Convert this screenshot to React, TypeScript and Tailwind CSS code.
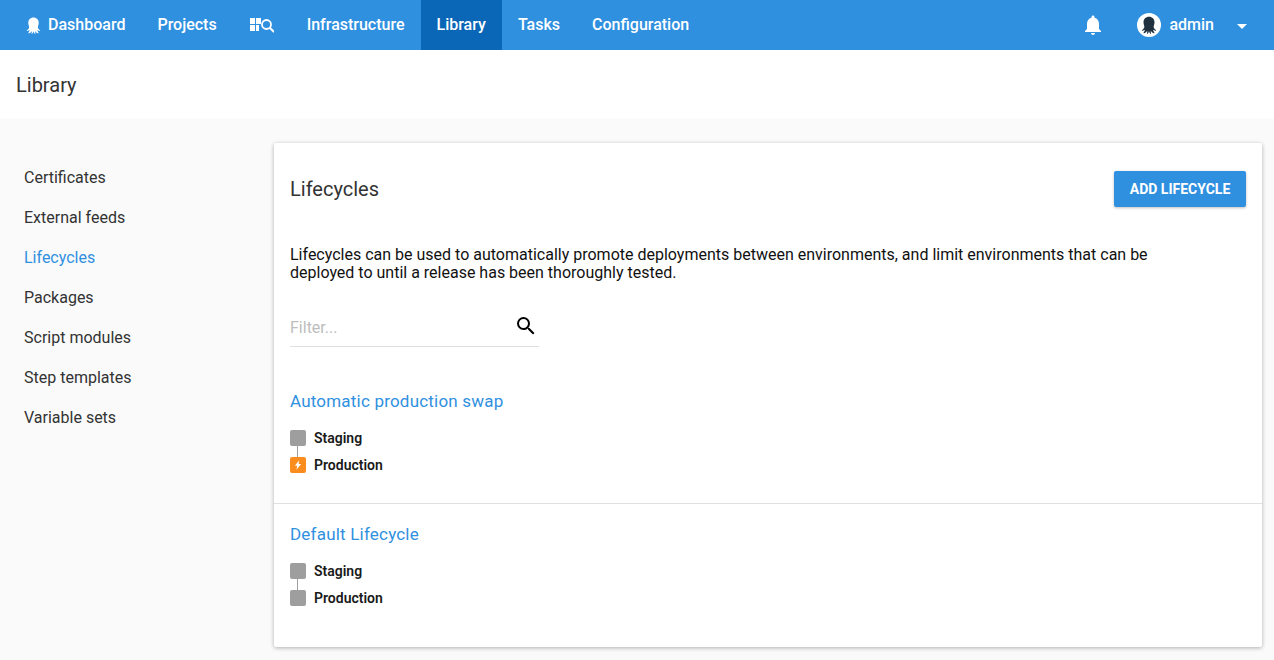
import React from "react";

const Octopus = ({ className }: { className?: string }) => (
  <svg viewBox="0 0 24 24" className={className} fill="currentColor">
    <path d="M12 2c-4 0-6.6 2.9-6.6 6.6 0 2.2.8 3.6 1 5.2.2 1.5-.9 3-2.6 4.2-.6.4-.2 1 .5.9 1.1-.1 2-.5 2.8-1.1-.2 1.3-.8 2.4-1.5 3.2-.4.5 0 1 .7.8 1.7-.5 2.8-1.7 3.5-3 .1 1.2.1 2.3-.2 3.3-.1.5.4.8.8.4.9-.9 1.4-2 1.6-3.2.2 1.2.7 2.3 1.6 3.2.4.4.9.1.8-.4-.3-1-.3-2.1-.2-3.3.7 1.3 1.8 2.5 3.5 3 .7.2 1.1-.3.7-.8-.7-.8-1.3-1.9-1.5-3.2.8.6 1.7 1 2.8 1.1.7.1 1.1-.5.5-.9-1.7-1.2-2.8-2.7-2.6-4.2.2-1.6 1-3 1-5.2C18.600 4.900 16 2 12 2z" />
  </svg>
);

const NavItem = ({ children, active }: { children: React.ReactNode; active?: boolean }) => (
  <div className={`flex h-[50px] items-center px-4 text-white ${active ? "bg-[#0a67b7]" : ""}`}>{children}</div>
);

const EnvRow = ({ name, lightning }: { name: string; lightning?: boolean }) => (
  <div className="flex h-4 items-center gap-2">
    <div className={`flex h-4 w-4 items-center justify-center rounded-[2px] ${lightning ? "bg-[#fb8c1e]" : "bg-[#9e9e9e]"}`}>
      {lightning && (
        <svg viewBox="0 0 10 12" className="h-[10px] w-[8px]" fill="#fff">
          <path d="M6.500 0 1 6.800h3L3 12l6-7.200H5.800z" />
        </svg>
      )}
    </div>
    <span className="text-sm font-semibold text-[#1a1a1a]">{name}</span>
  </div>
);

const Lifecycle = ({ title, lightning }: { title: string; lightning?: boolean }) => (
  <div className="px-4">
    <div className="text-[17px] leading-6 tracking-[0.2px] text-[#3090e0]">{title}</div>
    <div className="mt-[17px] flex flex-col">
      <EnvRow name="Staging" />
      <div className="ml-[7px] h-[11px] w-px bg-[#9e9e9e]" />
      <EnvRow name="Production" lightning={lightning} />
    </div>
  </div>
);

const sidebar = ["Certificates", "External feeds", "Lifecycles", "Packages", "Script modules", "Step templates", "Variable sets"];

export default function App() {
  return (
    <div className="h-[660px] w-[1274px] overflow-hidden bg-[#fafafa] font-['Roboto',sans-serif]">
      <header className="flex h-[50px] items-center justify-between bg-[#3090e0] pl-2 text-base font-medium">
        <nav className="flex items-center">
          <NavItem>
            <Octopus className="mr-[5px] h-[19px] w-[19px]" />
            Dashboard
          </NavItem>
          <NavItem>Projects</NavItem>
          <NavItem>
            <svg viewBox="0 0 24 16" className="mx-[1px] h-4 w-6" fill="#fff">
              <rect x="0" y="1" width="5" height="6" />
              <rect x="6" y="1" width="5" height="6" />
              <rect x="0" y="8" width="5" height="6" />
              <rect x="6" y="8" width="3" height="6" />
              <circle cx="16.500" cy="7.500" r="4.500" fill="none" stroke="#fff" strokeWidth="1.800" />
              <path d="M20 11l3.500 3.500" stroke="#fff" strokeWidth="2" strokeLinecap="round" />
            </svg>
          </NavItem>
          <NavItem>Infrastructure</NavItem>
          <NavItem active>Library</NavItem>
          <NavItem>Tasks</NavItem>
          <NavItem>Configuration</NavItem>
        </nav>
        <div className="flex items-center text-white">
          <svg viewBox="0 0 24 24" className="h-[24px] w-[24px]" fill="#fff">
            <path d="M12 22c1.100 0 2-.9 2-2h-4c0 1.100.9 2 2 2zm6-6v-5c0-3.100-1.600-5.600-4.500-6.300V4c0-.8-.7-1.500-1.500-1.500s-1.500.7-1.500 1.500v.7C7.600 5.400 6 7.900 6 11v5l-2 2v1h16v-1z" />
          </svg>
          <div className="ml-[32px] flex h-6 w-6 items-center justify-center rounded-full bg-white text-[#1f303f]">
            <Octopus className="h-[20px] w-[20px]" />
          </div>
          <span className="ml-2">admin</span>
          <svg viewBox="0 0 10 5" className="ml-[23px] mr-[27px] h-[5px] w-[10px] translate-y-[1px]" fill="#fff">
            <path d="M0 0l5 5 5-5z" />
          </svg>
        </div>
      </header>

      <div className="flex h-[69px] items-center bg-white px-4 text-xl text-[#333]">Library</div>

      <div className="flex pt-6">
        <aside className="w-[274px] shrink-0 pl-6 pt-[15px]">
          {sidebar.map((s) => (
            <div key={s} className={`flex h-10 items-center text-base ${s === "Lifecycles" ? "text-[#3090e0]" : "text-[#333]"}`}>
              {s}
            </div>
          ))}
        </aside>

        <main className="h-[504px] w-[988px] rounded-[2px] bg-white shadow-[0_1px_4px_rgba(0,0,0,0.3)]">
          <div className="flex items-center justify-between px-4 pt-7">
            <h1 className="text-xl text-[#333]">Lifecycles</h1>
            <button className="h-9 w-[132px] rounded-[2px] bg-[#3090e0] text-sm font-bold text-white shadow-[0_1px_3px_rgba(0,0,0,0.25)]">
              ADD LIFECYCLE
            </button>
          </div>

          <p className="mt-[39px] px-4 text-base leading-[18px] text-[#111]">
            Lifecycles can be used to automatically promote deployments between environments, and limit environments that can be
            <br />
            deployed to until a release has been thoroughly tested.
          </p>

          <div className="ml-4 mt-[27px] flex h-[38px] w-[249px] items-center justify-between border-b border-[#e0e0e0] pr-[1px]">
            <span className="text-base text-[#bdbdbd]">Filter...</span>
            <svg viewBox="0 0 24 24" className="-mt-[4px] h-6 w-6" fill="#000">
              <path d="M15.500 14h-.79l-.28-.27A6.470 6.470 0 0 0 16 9.500 6.500 6.500 0 1 0 9.500 16c1.610 0 3.090-.59 4.230-1.570l.27.28v.79l5 4.990L20.490 19l-4.990-5zm-6 0C7.010 14 5 11.990 5 9.500S7.010 5 9.500 5 14 7.010 14 9.500 11.990 14 9.500 14z" />
            </svg>
          </div>

          <div className="mt-[42px] h-[115px] border-b border-[#e0e0e0]">
            <Lifecycle title="Automatic production swap" lightning />
          </div>
          <div className="pt-[18px]">
            <Lifecycle title="Default Lifecycle" />
          </div>
        </main>
      </div>
    </div>
  );
}
